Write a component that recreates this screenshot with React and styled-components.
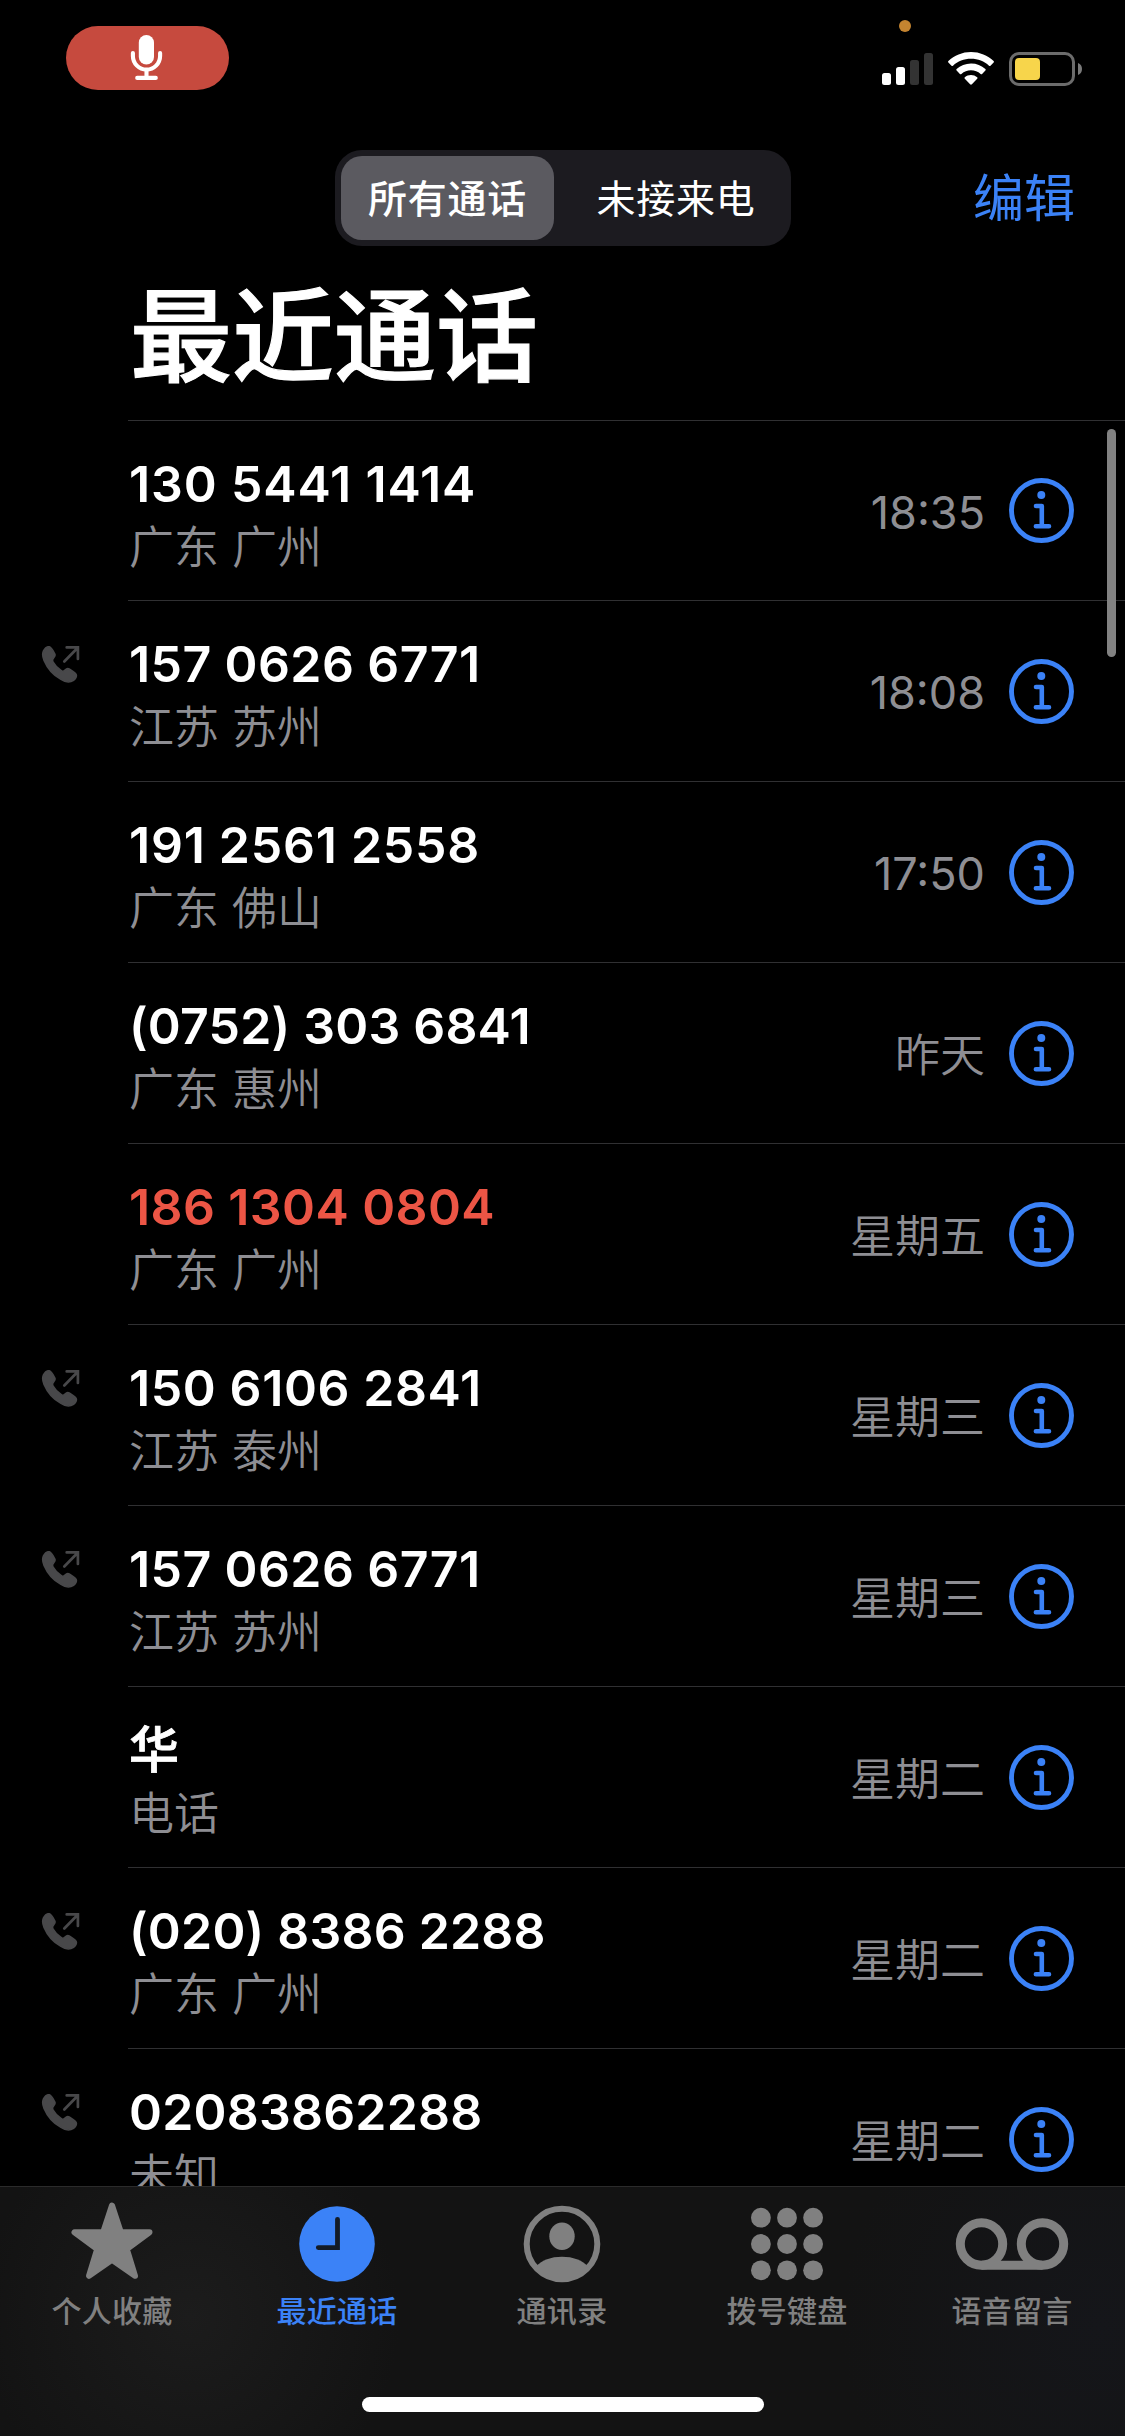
import React from 'react';
import styled, { createGlobalStyle } from 'styled-components';

const BLUE = '#3b82f7';
const GRAY = '#8e8e93';
const TAB_GRAY = '#808080';

const GlobalStyle = createGlobalStyle`
  * { box-sizing: border-box; }
  body {
    margin: 0;
    background: #000;
    font-family: Inter, "Noto Sans CJK SC", sans-serif;
    -webkit-font-smoothing: antialiased;
  }
`;

const Screen = styled.div`
  width: 1125px;
  height: 2436px;
  background: #000;
  color: #fff;
  display: flex;
  flex-direction: column;
  overflow: hidden;
  position: relative;
`;

const StatusBar = styled.header`
  height: 150px;
  flex: none;
  display: flex;
  justify-content: space-between;
  align-items: flex-start;
  padding: 26px 43px 0 66px;
`;

const RecordingPill = styled.div`
  width: 163px;
  height: 64px;
  border-radius: 32px;
  background: #c64a3e;
  display: flex;
  justify-content: center;
  padding: 9px 2px 0 0;
`;

const StatusIcons = styled.div`
  display: flex;
  align-items: flex-start;
  margin-top: 26px;
  gap: 15px;
`;

const PrivacyDot = styled.span`
  position: absolute;
  top: 20px;
  left: 899px;
  width: 12px;
  height: 12px;
  border-radius: 6px;
  background: #c48430;
`;

const NavBar = styled.nav`
  height: 96px;
  flex: none;
  display: grid;
  grid-template-columns: 335px 456px 1fr;
  align-items: center;
`;

const Segmented = styled.div`
  grid-column: 2;
  height: 96px;
  padding: 6px;
  display: flex;
  justify-content: space-between;
  border-radius: 27px;
  background: #1c1b20;
`;

const Segment = styled.button`
  border: 0;
  padding: 0 0 4px;
  width: ${(p) => (p.$active ? 213 : 218)}px;
  border-radius: 21px;
  background: ${(p) => (p.$active ? '#5b5a60' : 'transparent')};
  color: #fff;
  font-family: inherit;
  font-size: 39px;
  font-weight: ${(p) => (p.$active ? 500 : 400)};
  letter-spacing: 0.7px;
  white-space: nowrap;
`;

const EditButton = styled.button`
  border: 0;
  background: none;
  color: ${BLUE};
  font-family: inherit;
  font-size: 51px;
  line-height: 70px;
  padding: 0;
  justify-self: end;
  margin: 2px 50px 0 0;
`;

const Title = styled.h1`
  height: 174px;
  flex: none;
  margin: 0;
  padding: 17px 0 0 130px;
  font-size: 102px;
  line-height: 148px;
  font-weight: 500;
  -webkit-text-stroke: 1.2px #fff;
`;

const CallList = styled.ul`
  flex: 1;
  min-height: 0;
  overflow: hidden;
  list-style: none;
  margin: 0;
  padding: 0;
`;

const CallRow = styled.li`
  height: 181px;
  display: flex;
  &:first-child > div:last-child { border-top: 1px solid #303032; }
`;

const Gutter = styled.div`
  width: 128px;
  padding: 45px 0 0 41px;
`;

const RowBody = styled.div`
  flex: 1;
  display: flex;
  align-items: center;
  border-bottom: 1px solid #303032;
  padding-right: 51px;
`;

const Caller = styled.div`
  flex: 1;
  display: flex;
  flex-direction: column;
  padding: 7px 0 0 1px;
`;

const CallerName = styled.div`
  font-size: 50px;
  line-height: 62px;
  font-weight: ${(p) => (p.$contact ? 500 : 600)};
  -webkit-text-stroke: ${(p) => (p.$contact ? '0.8px #fff' : '0')};
  letter-spacing: ${(p) => p.$tracking || 0}px;
  white-space: nowrap;
  color: ${(p) => (p.$missed ? '#ec5545' : '#fff')};
`;

const CallerPlace = styled.div`
  margin-top: -1px;
  font-family: "Noto Sans CJK SC", sans-serif;
  font-size: 45px;
  line-height: 62px;
  font-weight: 350;
  word-spacing: 3px;
  color: ${GRAY};
`;

const CallTime = styled.time`
  font-size: 45px;
  line-height: 60px;
  font-weight: ${(p) => (p.$clock ? 400 : 350)};
  color: ${GRAY};
  margin-right: 24px;
  padding-top: ${(p) => (p.$clock ? 4 : 5)}px;
`;

const ScrollThumb = styled.div`
  position: absolute;
  top: 429px;
  left: 1107px;
  width: 9px;
  height: 228px;
  border-radius: 5px;
  background: #828282;
`;

const TabBar = styled.footer`
  height: 250px;
  flex: none;
  border-top: 1px solid #2b2b2b;
  background:
    radial-gradient(circle at 190px 130px, #1c1c1c 0, rgba(28, 28, 28, 0) 210px),
    radial-gradient(circle at 1100px 140px, #15161a 0, rgba(21, 22, 26, 0) 260px),
    #131313;
  display: flex;
  flex-direction: column;
  align-items: center;
`;

const Tabs = styled.div`
  width: 100%;
  height: 210px;
  display: grid;
  grid-template-columns: repeat(5, 1fr);
`;

const Tab = styled.div`
  display: flex;
  flex-direction: column;
  align-items: center;
  padding: 12px 1px 0 0;
  color: ${(p) => (p.$active ? BLUE : TAB_GRAY)};
`;

const TabLabel = styled.span`
  font-size: 30px;
  line-height: 44px;
  font-weight: 500;
  letter-spacing: 0.3px;
`;

const HomeIndicator = styled.div`
  width: 402px;
  height: 15px;
  border-radius: 8px;
  background: #fff;
`;

const MicIcon = () => (
  <svg width="33" height="46" viewBox="0 0 33 46" fill="none" stroke="#fff" strokeWidth="4.1" strokeLinecap="round">
    <rect x="8.8" y="0" width="15.2" height="29.5" rx="7.6" fill="#fff" stroke="none" />
    <path d="M2.900 18V21a13.600 13.600 0 0 0 27.200 0v-3M16.500 35v7.800M7.200 42.900h18.600" />
  </svg>
);

const SignalIcon = () => (
  <svg width="51" height="34" viewBox="0 0 51 34">
    <rect x="0" y="21" width="9" height="12" rx="2.5" fill="#fff" />
    <rect x="14" y="15" width="9" height="18" rx="2.5" fill="#fff" />
    <rect x="28" y="8" width="9" height="25" rx="2.5" fill="#333" />
    <rect x="42" y="1" width="9" height="32" rx="2.5" fill="#333" />
  </svg>
);

const WifiIcon = () => (
  <svg width="46" height="34" viewBox="0 0 46 34" fill="#fff">
    <path d="M23 0C14.300 0 6.200 3.400.4 9.100c-.5.500-.5 1 0 1.500l3.100 3.100c.5.500 1 .5 1.500 0C9.700 9.300 16 6.800 23 6.800s13.300 2.500 18 6.900c.5.500 1 .5 1.500 0l3.100-3.100c.5-.5.500-1 0-1.500C39.800 3.400 31.700 0 23 0Z" />
    <path d="M23 11.500c-5.500 0-10.600 2.100-14.400 5.600-.5.500-.5 1 0 1.500l3.300 3.300c.5.500 1 .4 1.500 0a14.200 14.200 0 0 1 19.200 0c.5.400 1 .5 1.500 0l3.300-3.300c.5-.5.500-1 0-1.500A21 21 0 0 0 23 11.500Z" />
    <path d="M23 23c-2.400 0-4.500.9-6.200 2.300-.5.500-.5 1 0 1.500l5.300 5.500c.6.600 1.200.6 1.800 0l5.300-5.500c.5-.5.500-1 0-1.500A9.600 9.600 0 0 0 23 23Z" />
  </svg>
);

const BatteryIcon = () => (
  <svg width="73" height="34" viewBox="0 0 73 34">
    <rect x="1.500" y="1.500" width="63" height="31" rx="8.500" fill="none" stroke="#6c6c6c" strokeWidth="3" />
    <rect x="6" y="6" width="25" height="22" rx="4" fill="#f7d54b" />
    <path d="M69 11c2.600 1 4 3.300 4 6s-1.400 5-4 6z" fill="#7a7a7a" />
  </svg>
);

const OutgoingIcon = () => (
  <svg width="40" height="40" viewBox="0 0 40 40" fill="#48484a">
    <path
      transform="translate(.6 -.3) scale(.95)"
      stroke="#48484a"
      strokeWidth="1.7"
      d="M2 5.500C3.600 2.600 6.200.8 8.200 1.200c1.200.3 4 4.200 5.600 7.300.8 1.600.4 2.700-1 4.200-1.500 1.600-1.800 2.500-.9 4.200 2 3.600 5.400 7.200 9.200 9.600 1.300.8 2.300.5 3.600-.9 1.600-1.600 2.700-2 4.300-1.100 2.700 1.600 6.300 4 7.300 5.700.9 1.700-.3 4.500-2.700 6.200-3.500 2.400-8.600 2.200-13.600-1.200C12 30.800 5.700 22.800 2.600 15.500 1 11.700.8 8 2 5.500Z"
    />
    <path d="M23.300 15.500 36.500 2M25.700 1.400h11.200v11.600" fill="none" stroke="#48484a" strokeWidth="2.700" strokeLinecap="round" />
  </svg>
);

const InfoIcon = () => (
  <svg width="65" height="65" viewBox="0 0 65 65" fill="none" stroke={BLUE}>
    <circle cx="32.500" cy="32.500" r="30" strokeWidth="4.900" />
    <circle cx="32.300" cy="17" r="4" fill={BLUE} stroke="none" />
    <path d="M27 28h5.800v20M26.900 48.200h13.100" strokeWidth="4.600" strokeLinecap="round" strokeLinejoin="round" />
  </svg>
);

const StarIcon = () => (
  <svg width="90" height="90" viewBox="0 0 90 90" fill="currentColor" stroke="currentColor" strokeWidth="6" strokeLinejoin="round">
    <path d="M45 6.500 53.800 33.300H82.500L59.800 50.200 68 76.800 45 60.800 22 76.800 30.200 50.200 7.500 33.300H36.200Z" />
  </svg>
);

const ClockIcon = () => (
  <svg width="90" height="90" viewBox="0 0 90 90">
    <circle cx="45" cy="45" r="37.800" fill="currentColor" />
    <path d="M45.500 20.300V48.600H26.300" fill="none" stroke="#131b26" strokeWidth="4.800" strokeLinecap="round" />
  </svg>
);

const ContactIcon = () => (
  <svg width="90" height="90" viewBox="0 0 90 90">
    <circle cx="45" cy="45" r="35.300" fill="none" stroke="currentColor" strokeWidth="6" />
    <ellipse cx="45" cy="37.300" rx="12.700" ry="13.800" fill="currentColor" />
    <path d="M19 67.500C25 61 34 57.700 45 57.700S65 61 71 67.500A34.400 34.400 0 0 1 19 67.500Z" fill="currentColor" />
  </svg>
);

const KeypadIcon = () => (
  <svg width="90" height="90" viewBox="0 0 90 90" fill="currentColor">
    {[18.7, 45, 71.3].map((cy) =>
      [18.9, 45, 71.1].map((cx) => <circle key={`${cx}-${cy}`} cx={cx} cy={cy} r="9.900" />)
    )}
  </svg>
);

const VoicemailIcon = () => (
  <svg width="114" height="90" viewBox="0 0 114 90" fill="none" stroke="currentColor" strokeWidth="9">
    <circle cx="26.500" cy="45" r="21.200" />
    <circle cx="87.500" cy="45" r="21.200" />
    <path d="M26.500 66.200h61" />
  </svg>
);

const CALLS = [
  { name: '130 5441 1414', place: '广东 广州', time: '18:35', tracking: 0.85 },
  { name: '157 0626 6771', place: '江苏 苏州', time: '18:08', outgoing: true, tracking: 0.4 },
  { name: '191 2561 2558', place: '广东 佛山', time: '17:50', tracking: 0.75 },
  { name: '(0752) 303 6841', place: '广东 惠州', time: '昨天', tracking: 0.2 },
  { name: '186 1304 0804', place: '广东 广州', time: '星期五', missed: true, tracking: 0.4 },
  { name: '150 6106 2841', place: '江苏 泰州', time: '星期三', outgoing: true, tracking: 0.6 },
  { name: '157 0626 6771', place: '江苏 苏州', time: '星期三', outgoing: true, tracking: 0.4 },
  { name: '华', place: '电话', time: '星期二', contact: true },
  { name: '(020) 8386 2288', place: '广东 广州', time: '星期二', outgoing: true, tracking: 0.2 },
  { name: '02083862288', place: '未知', time: '星期二', outgoing: true, tracking: 0.2 },
];

const TABS = [
  { label: '个人收藏', Icon: StarIcon },
  { label: '最近通话', Icon: ClockIcon, active: true },
  { label: '通讯录', Icon: ContactIcon },
  { label: '拨号键盘', Icon: KeypadIcon },
  { label: '语音留言', Icon: VoicemailIcon },
];

export default function App() {
  return (
    <Screen lang="zh-CN">
      <GlobalStyle />
      <StatusBar>
        <RecordingPill><MicIcon /></RecordingPill>
        <StatusIcons>
          <SignalIcon />
          <WifiIcon />
          <BatteryIcon />
        </StatusIcons>
        <PrivacyDot />
      </StatusBar>
      <NavBar>
        <Segmented>
          <Segment $active>所有通话</Segment>
          <Segment>未接来电</Segment>
        </Segmented>
        <EditButton>编辑</EditButton>
      </NavBar>
      <Title>最近通话</Title>
      <CallList>
        {CALLS.map((call, i) => (
          <CallRow key={i}>
            <Gutter>{call.outgoing && <OutgoingIcon />}</Gutter>
            <RowBody>
              <Caller>
                <CallerName $missed={call.missed} $contact={call.contact} $tracking={call.tracking}>
                  {call.name}
                </CallerName>
                <CallerPlace>{call.place}</CallerPlace>
              </Caller>
              <CallTime $clock={call.time.includes(':')}>{call.time}</CallTime>
              <InfoIcon />
            </RowBody>
          </CallRow>
        ))}
      </CallList>
      <ScrollThumb />
      <TabBar>
        <Tabs>
          {TABS.map(({ label, Icon, active }) => (
            <Tab key={label} $active={active}>
              <Icon />
              <TabLabel>{label}</TabLabel>
            </Tab>
          ))}
        </Tabs>
        <HomeIndicator />
      </TabBar>
    </Screen>
  );
}
